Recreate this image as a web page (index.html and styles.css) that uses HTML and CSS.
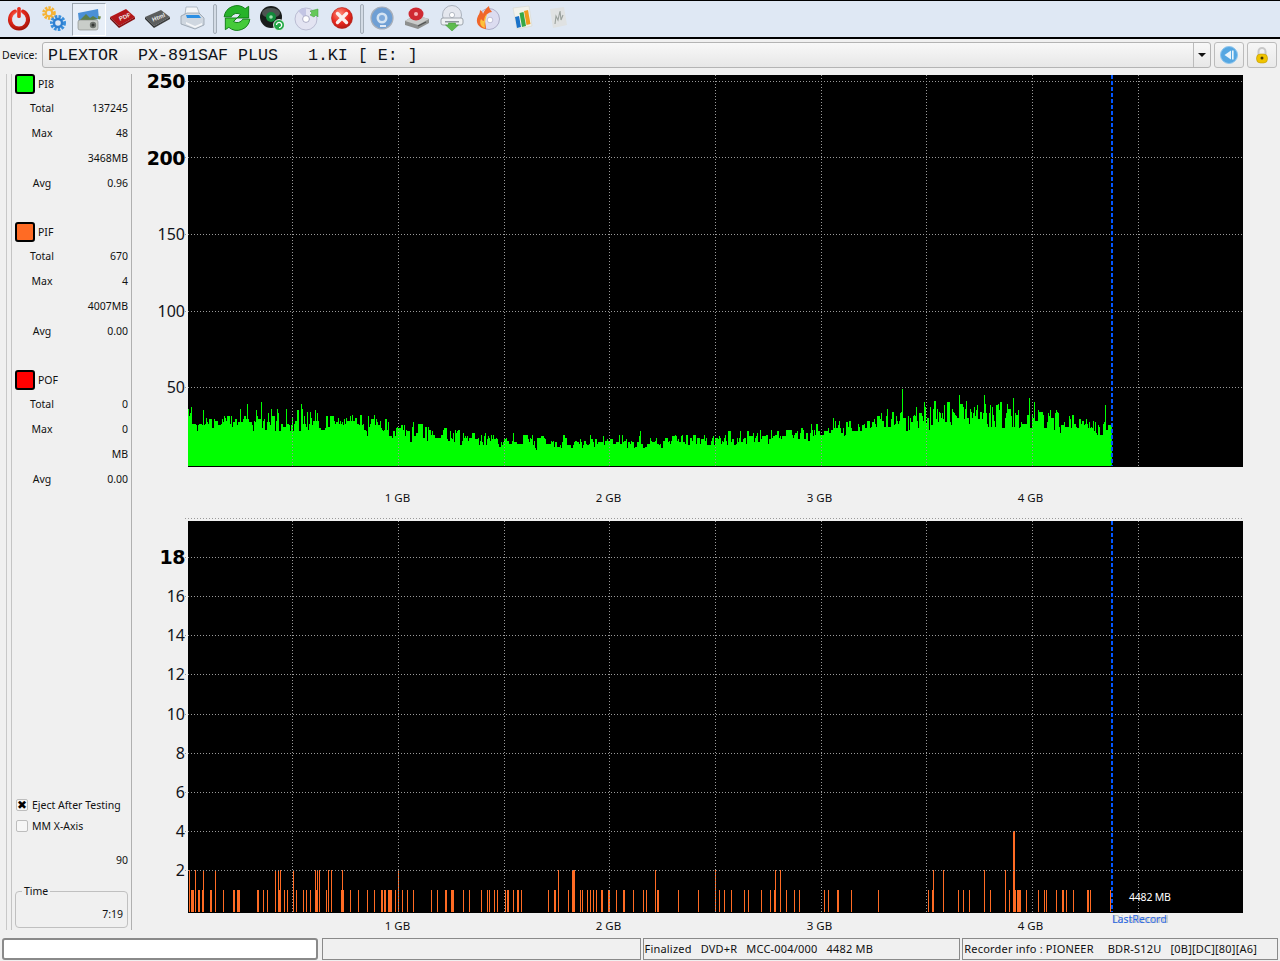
FILE: index.html
```html
<!DOCTYPE html>
<html lang="en">
<head>
<meta charset="utf-8">
<title>Disc Quality Test</title>
<link rel="stylesheet" href="styles.css">
</head>
<body>
<div class="app">
  <header class="toolbar">
    <svg class="tool" viewBox="0 0 28 28"><defs><radialGradient id="rd" cx=".4" cy=".3" r=".8"><stop offset="0" stop-color="#ff8a70"/><stop offset=".5" stop-color="#e62a1c"/><stop offset="1" stop-color="#a31208"/></radialGradient></defs><path d="M10 7.500a9 9 0 1 0 8 0" fill="none" stroke="url(#rd)" stroke-width="4" stroke-linecap="round"/><rect x="12.200" y="3" width="3.600" height="11" rx="1.600" fill="#e8301f"/></svg>
    <svg class="tool" viewBox="0 0 28 28"><circle cx="9" cy="9" r="5" fill="none" stroke="#f5b335" stroke-width="3.600" stroke-dasharray="2.200 1"/><circle cx="9" cy="9" r="3.200" fill="none" stroke="#f5b335" stroke-width="2"/><circle cx="18" cy="19" r="6" fill="none" stroke="#3a8fdc" stroke-width="4" stroke-dasharray="2.400 1.100"/><circle cx="18" cy="19" r="4" fill="none" stroke="#2f7fd0" stroke-width="2.400"/></svg>
    <span class="tool-on"><svg class="tool" viewBox="0 0 28 28"><path d="M3 8l20-4 1 10-20 3z" fill="#4b90d6"/><path d="M5 15l6-6 4 4 3-2 5 3-16 3z" fill="#5d7f4a"/><rect x="3" y="15" width="20" height="10" rx="2" fill="#c9cdc9" stroke="#80857f" stroke-width=".6"/><circle cx="18" cy="20" r="3.200" fill="#6f746f"/><circle cx="18" cy="20" r="1.500" fill="#353835"/><path d="M23 11l3 .5-1 3-2-.5z" fill="#6f8a48"/></svg></span>
    <svg class="tool" viewBox="0 0 28 28"><path d="M2 13L18 5l9 8-16 9z" fill="#b3171a"/><path d="M2 13l9 9v2L2 15z" fill="#6e0c0e"/><path d="M11 22l16-9v2L11 24z" fill="#8a1012"/><text class="chip-text" x="11" y="16" transform="rotate(-22 14 14)">PDF</text></svg>
    <svg class="tool" viewBox="0 0 28 28"><path d="M2 13L18 6l9 7-16 9z" fill="#5c5e5e"/><path d="M2 13l9 9v2L2 15z" fill="#2d2e2e"/><path d="M11 22l16-9v2L11 24z" fill="#3d3e3e"/><text class="chip-text" x="9" y="16" transform="rotate(-22 14 14)">Html</text></svg>
    <svg class="tool" viewBox="0 0 28 28"><path d="M8 3l11 0 3 8H7z" fill="#f4f6f8" stroke="#9aa5b1" stroke-width=".7"/><path d="M3 12l6-3h12l5 5v7l-9 4-14-5z" fill="#cfd7e0" stroke="#8995a1" stroke-width=".7"/><path d="M8 11h13l2 3H9z" fill="#2b8fe3"/><path d="M8 18l9 4 7-3v2l-7 3-9-4z" fill="#f4f6f8"/></svg>
    <i class="sep"></i>
    <svg class="tool" viewBox="2 2 24 24"><path d="M3 13a11 11 0 0 1 18-7l3-2v10h-10l3-3a5.500 5.500 0 0 0-8 2z" fill="#27b32a" stroke="#0c7a12" stroke-width=".8"/><path d="M25 15a11 11 0 0 1-18 7l-3 2v-10h10l-3 3a5.500 5.500 0 0 0 8-2z" fill="#45cb3a" stroke="#0c7a12" stroke-width=".8"/></svg>
    <svg class="tool" viewBox="0 0 28 28"><circle cx="13" cy="13" r="11" fill="#191c1b"/><ellipse cx="13" cy="9" rx="9" ry="5" fill="#4d5351"/><circle cx="13" cy="13" r="5" fill="#128a3a"/><circle cx="13" cy="13" r="1.800" fill="#9fe0b0"/><circle cx="21" cy="21" r="5.500" fill="#23a847" stroke="#fff" stroke-width=".8"/><path d="M18.500 21a2.600 2.600 0 1 1 2.500 2.600" fill="none" stroke="#fff" stroke-width="1.300"/></svg>
    <svg class="tool" viewBox="0 0 28 28"><circle cx="13" cy="15" r="11" fill="#e3e4f2" stroke="#a9abc4" stroke-width=".7"/><path d="M13 15L5 7a11 11 0 0 1 8-3z" fill="#c3c5e4"/><circle cx="13" cy="15" r="3.400" fill="#fff" stroke="#9a9cba" stroke-width=".8"/><path d="M17 11l2-2-2-2 8-2 0 8-2-2-2 2z" fill="#66c95a" stroke="#3b9d36" stroke-width=".5"/></svg>
    <svg class="tool" viewBox="0 0 28 28"><defs><radialGradient id="rx" cx=".4" cy=".3" r=".8"><stop offset="0" stop-color="#ff8e7a"/><stop offset=".55" stop-color="#e8281f"/><stop offset="1" stop-color="#a8160f"/></radialGradient></defs><circle cx="14" cy="14" r="10.500" fill="url(#rx)" stroke="#b01c14" stroke-width=".6"/><path d="M9.500 9.500l9 9m0-9l-9 9" stroke="#fbf0ee" stroke-width="3.400" stroke-linecap="round"/></svg>
    <i class="sep sep-b"></i>
    <svg class="tool" viewBox="0 0 28 28"><circle cx="14" cy="14" r="11" fill="#6f9fd4" stroke="#a7aeb9" stroke-width="1.200"/><circle cx="14" cy="14" r="5.500" fill="#d5e4f3"/><circle cx="14" cy="14" r="3" fill="#7faadb"/><rect x="12" y="21" width="6" height="2" fill="#dfe8f4"/></svg>
    <svg class="tool" viewBox="0 0 28 28"><path d="M2 17l10-6 14 4v4l-11 6-13-4z" fill="#8d8f8e"/><path d="M2 17l13 4 11-6-14-4z" fill="#c9cbca"/><ellipse cx="13" cy="10" rx="7.500" ry="6.500" fill="#cf2a32"/><circle cx="13" cy="10" r="2" fill="#f5b5b8"/><path d="M15 22l8-4" stroke="#4f5150" stroke-width="1.200"/></svg>
    <svg class="tool" viewBox="0 0 28 28"><circle cx="14" cy="11" r="9.500" fill="#e4e7ee" stroke="#9ca3af" stroke-width=".8"/><circle cx="14" cy="11" r="2.600" fill="#fff" stroke="#9ca3af" stroke-width=".7"/><rect x="3" y="14" width="22" height="7" rx="2" fill="#eef1f4" stroke="#8d949c" stroke-width=".8"/><rect x="7" y="17" width="14" height="1.500" fill="#8d949c"/><path d="M10.500 19h7v2h3L14 27l-6.500-6h3z" fill="#5dbb4e" stroke="#3a9233" stroke-width=".5"/></svg>
    <svg class="tool" viewBox="0 0 28 28"><circle cx="16" cy="15" r="10.500" fill="#dcdcf0" stroke="#9fa0bd" stroke-width=".8"/><circle cx="17" cy="16" r="2.800" fill="#fff" stroke="#9fa0bd" stroke-width=".6"/><path d="M13 25C5 24 2 18 5 12c1-2 2-3 2-6 2 1 3 3 3 4 1-3 3-6 6-8 0 3 2 4 3 6-3 0-7 3-7 7 0 4 1 7 1 10z" fill="#f0662a"/><path d="M12 24c-4-1-6-5-4-9 1 1 2 2 3 2 0-3 1-5 3-7-1 5-3 8-2 14z" fill="#fdc13c"/></svg>
    <svg class="tool" viewBox="0 0 28 28"><path d="M5 4l16-2 3 20-15 3z" fill="#f2f2ec" stroke="#d6d6cc" stroke-width=".6"/><path d="M7 13l4-1 2 11-4 1z" fill="#1a72c9"/><path d="M11.500 9l4-1 2.500 14-4 1z" fill="#37a845"/><path d="M16 7l4-1 2.500 14-4 1z" fill="#f09a1c"/></svg>
    <svg class="tool tool-faded" viewBox="0 0 28 28"><path d="M7 5l14-2 3 18-14 3z" fill="#e1e2df"/><path d="M12 20l1-8 2 4 2-9 1 9 2-5" fill="none" stroke="#8f958e" stroke-width="1.100"/></svg>
  </header>

  <div class="device-row">
    <span class="device-label">Device:</span>
    <div class="device-select">
      <span class="device-value">PLEXTOR  PX-891SAF PLUS   1.KI [ E: ]</span>
      <span class="device-arrow"><i></i></span>
    </div>
    <button class="icon-btn" type="button" aria-label="Back"><svg viewBox="0 0 20 20" class="btn-svg"><circle cx="10" cy="10" r="8.500" fill="#55a7e2" stroke="#8fc6ee"/><path d="M12 5.500v9L5.500 10z" fill="#eaf5fc"/><rect x="13" y="5.500" width="1.600" height="9" fill="#eaf5fc"/></svg></button>
    <button class="icon-btn" type="button" aria-label="Lock"><svg viewBox="0 0 20 20" class="btn-svg"><path d="M6.500 10V6.500a3.500 3.500 0 0 1 7 0V10" fill="none" stroke="#c8c8c8" stroke-width="2"/><rect x="4.500" y="9" width="11" height="9" rx="4" fill="#f0c400" stroke="#b48f00" stroke-width=".5"/><circle cx="10" cy="13" r="1.500" fill="#4a3b00"/></svg></button>
  </div>

  <div class="main">
    <aside class="side">
      <section class="stat-group">
        <div class="stat-head"><i class="swatch swatch-green"></i><span>PI8</span></div>
        <div class="stat-row"><span class="stat-key">Total</span><span>137245</span></div>
        <div class="stat-row"><span class="stat-key">Max</span><span>48</span></div>
        <div class="stat-row"><span class="stat-key"></span><span>3468MB</span></div>
        <div class="stat-row"><span class="stat-key">Avg</span><span>0.96</span></div>
      </section>
      <section class="stat-group">
        <div class="stat-head"><i class="swatch swatch-orange"></i><span>PIF</span></div>
        <div class="stat-row"><span class="stat-key">Total</span><span>670</span></div>
        <div class="stat-row"><span class="stat-key">Max</span><span>4</span></div>
        <div class="stat-row"><span class="stat-key"></span><span>4007MB</span></div>
        <div class="stat-row"><span class="stat-key">Avg</span><span>0.00</span></div>
      </section>
      <section class="stat-group">
        <div class="stat-head"><i class="swatch swatch-red"></i><span>POF</span></div>
        <div class="stat-row"><span class="stat-key">Total</span><span>0</span></div>
        <div class="stat-row"><span class="stat-key">Max</span><span>0</span></div>
        <div class="stat-row"><span class="stat-key"></span><span>MB</span></div>
        <div class="stat-row"><span class="stat-key">Avg</span><span>0.00</span></div>
      </section>
      <div class="side-bottom">
        <label class="check"><i class="box box-on">&#10006;</i>Eject After Testing</label>
        <label class="check"><i class="box"></i>MM X-Axis</label>
        <div class="speed">90</div>
        <fieldset class="time"><legend>Time</legend><div>7:19</div></fieldset>
      </div>
    </aside>

    <div class="charts">
      <div class="chart">
        <div class="yaxis yaxis-top">
          <span class="big">250</span><span class="big">200</span><span>150</span><span>100</span><span>50</span>
        </div>
        <div class="plot" id="plot-pi"></div>
      </div>
      <div class="xaxis xaxis-top"><span>1 GB</span><span>2 GB</span><span>3 GB</span><span>4 GB</span></div>
      <div class="chart">
        <div class="yaxis yaxis-low">
          <span class="big">18</span><span>16</span><span>14</span><span>12</span><span>10</span><span>8</span><span>6</span><span>4</span><span>2</span>
        </div>
        <div class="plot" id="plot-pif">
          <span class="mark-size">4482 MB</span>
          <span class="mark-ghost">DiskRecord</span>
          <span class="mark-last">LastRecord</span>
        </div>
      </div>
      <div class="xaxis xaxis-low"><span>1 GB</span><span>2 GB</span><span>3 GB</span><span>4 GB</span></div>
    </div>
  </div>

  <footer class="status">
    <div class="cell cell-input"></div>
    <div class="cell cell-empty"></div>
    <div class="cell cell-disc"><span>Finalized</span><span>DVD+R</span><span>MCC-004/000</span><span>4482 MB</span></div>
    <div class="cell cell-rec"><span class="rec-head">Recorder info&nbsp;: PIONEER</span><span>BDR-S12U</span><span>[0B][DC][80][A6]</span></div>
  </footer>
</div>
<script src="chart.js"></script>
</body>
</html>
```
FILE: styles.css
```css
* { box-sizing: border-box; }
html, body { margin: 0; height: 100%; }
body {
  background: #f0f0f0;
  color: #111;
  font: 10.5px/14px "Noto Sans", "Liberation Sans", sans-serif;
  overflow: hidden;
}
.app { display: flex; flex-direction: column; height: 961px; }

.toolbar {
  height: 39px;
  flex: none;
  display: flex;
  align-items: center;
  padding: 0 0 0 5px;
  background: #dfe8f4;
  border-top: 1px solid #000;
  border-bottom: 2px solid #000;
}
.tool { width: 28px; height: 28px; flex: none; margin: 0 7px 2px 0; display: block; }
.tool-faded { opacity: .85; }
.tool-on {
  width: 34px; height: 33px; flex: none;
  margin: 0 2px 0 -3px;
  display: flex; align-items: center; justify-content: center;
  background: #e8eff8;
  border: 1px solid #9ca6b0;
  border-right-color: #fff; border-bottom-color: #fff;
}
.tool-on .tool { margin: 0; }
.sep {
  width: 4px; height: 30px; flex: none;
  margin: 0 6px 0 0;
  border: 1px solid #a4aeb9;
  border-radius: 2px;
  background: #d3dbe5;
}
.sep-b { margin: 0 4px 0 -3px; }
.chip-text { font: bold 6px "Liberation Sans", sans-serif; fill: #eee; }

.device-row {
  height: 33px; flex: none;
  display: flex;
  align-items: flex-start;
  padding: 3px 3px 0 2px;
}
.device-label { width: 40px; line-height: 26px; flex: none; }
.device-select {
  width: 1169px; height: 26px; flex: none;
  display: flex;
  border: 1px solid #b4b4b4;
  border-radius: 3px;
  background: linear-gradient(#f8f8f8, #e7e7e7);
}
.device-value {
  flex: 1;
  padding-left: 5px;
  font: 16.67px/25px "Liberation Mono", monospace;
  white-space: pre;
  color: #10131a;
}
.device-arrow {
  width: 17px;
  border-left: 1px solid #bbb;
  display: flex; align-items: center; justify-content: center;
}
.device-arrow i {
  width: 0; height: 0;
  border-left: 4px solid transparent;
  border-right: 4px solid transparent;
  border-top: 4px solid #111;
}
.icon-btn {
  width: 30px; height: 26px; flex: none;
  margin-left: 3px; padding: 0;
  display: flex; align-items: center; justify-content: center;
  border: 1px solid #bcbcbc;
  border-radius: 3px;
  background: linear-gradient(#f6f6f6, #e9e9e9);
}
.btn-svg { width: 20px; height: 20px; }

.main { flex: 1; min-height: 0; height: 859px; display: flex; overflow: hidden; }

.side {
  flex: none;
  width: 121px;
  margin: 2px 0 1px 11px;
  padding: 0 3px;
  display: flex; flex-direction: column;
  border-left: 1px solid #c4c4c4;
  border-right: 1px solid #b0b0b0;
  box-shadow: -4px 0 0 0 #f0f0f0, -5px 0 0 0 #c8c8c8;
}
.stat-group { height: 148px; flex: none; }
.stat-head { height: 20px; display: flex; align-items: center; gap: 3px; }
.swatch {
  width: 20px; height: 20px; flex: none;
  border: 2px solid #000; border-radius: 3px;
}
.swatch-green { background: #00ff00; }
.swatch-orange { background: #ff6b24; }
.swatch-red { background: #ff0000; }
.stat-row {
  height: 25px;
  display: flex; justify-content: space-between; align-items: center;
  position: relative; top: 1px;
}
.stat-key { width: 54px; text-align: center; }
.side-bottom { margin-top: auto; }
.check { height: 21px; display: flex; align-items: center; gap: 4px; margin-left: 1px; }
.box {
  width: 12px; height: 12px; flex: none;
  border: 1px solid #bdbdbd; border-radius: 2px;
  background: #f6f6f6;
  font: 12px/10px "DejaVu Sans", sans-serif;
  text-align: center; color: #000;
}
.speed { text-align: right; margin-top: 17px; line-height: 14px; }
.time {
  margin: 19px 0 2px;
  padding: 0 4px 0 0;
  height: 42px;
  min-width: 0;
  border: 1px solid #c0c0c0;
  border-radius: 4px;
  text-align: right;
}
.time legend { margin-left: 6px; padding: 0 2px; text-align: left; line-height: 10px; }
.time div { margin-top: 11px; }

.charts { flex: 1; min-width: 0; padding-top: 3px; }
.chart { display: flex; height: 392px; }
.yaxis {
  width: 56px; flex: none;
  display: grid;
  justify-items: end;
  align-items: center;
  padding-right: 3px;
  font-size: 16px;
  color: #10131a;
}
.yaxis .big { font: bold 19px/16px "DejaVu Sans", sans-serif; letter-spacing: -.5px; color: #000; }
.yaxis-top { grid-auto-rows: 76.6px; margin-top: -32.4px; align-content: start; }
.yaxis-low { grid-auto-rows: 39.13px; margin-top: 16.5px; align-content: start; }
.plot { position: relative; width: 1055px; height: 392px; background: #000; flex: none; }
.plot svg { position: absolute; left: 0; top: 0; overflow: visible; display: block; }
.xaxis { display: flex; padding-left: 160px; font-size: 11.5px; }
.xaxis span { width: 211px; text-align: center; }
.xaxis-top { height: 54px; padding-top: 24px; }
.xaxis-low { height: 18px; padding-top: 6px; }
.mark-size { position: absolute; left: 941px; top: 369px; color: #fff; letter-spacing: -.2px; }
.mark-ghost { position: absolute; left: 925px; top: 391px; color: #b9b9b9; }
.mark-last { position: absolute; left: 924px; top: 391px; color: #2a6ae8; }

.status {
  height: 30px; flex: none;
  display: flex;
  gap: 2px;
  padding: 7px 2px 1px 2px;
}
.cell {
  height: 22px;
  display: flex;
  gap: 9px;
  border: 1px solid #8a8a8a;
  padding-left: 1px;
  font-size: 11px;
  letter-spacing: .2px;
  line-height: 20px;
  white-space: nowrap;
  overflow: hidden;
}
.cell-input { width: 316px; background: #fff; border: 2px solid #8a8a8a; border-radius: 3px; margin-right: 2px; }
.cell-empty { width: 319px; }
.cell-disc { width: 318px; }
.cell-rec { width: 316px; }
.rec-head { margin-right: 5px; }
```
FILE: chart.js
```js
(function () {
  var NS = 'http://www.w3.org/2000/svg';
  var VX = [104, 210, 316, 421, 527, 633, 738, 844, 950];
  var W = 1055, H = 392, BASE = 391, BLUE = 923;
  var DOT = '#9a9a9a';

  function el(name, attrs, parent) {
    var n = document.createElementNS(NS, name);
    for (var k in attrs) n.setAttribute(k, attrs[k]);
    if (parent) parent.appendChild(n);
    return n;
  }
  function svg(host) {
    var s = el('svg', { width: W, height: H, viewBox: '0 0 ' + W + ' ' + H, 'shape-rendering': 'crispEdges' });
    host.insertBefore(s, host.firstChild);
    return s;
  }
  function grid(s, hy, x0) {
    var d = '';
    hy.forEach(function (y) { d += 'M' + x0 + ' ' + (y + 0.5) + 'H' + W; });
    VX.forEach(function (x) { d += 'M' + (x + 0.5) + ' 0V' + BASE; });
    el('path', { d: d, fill: 'none', stroke: DOT, 'stroke-width': 1, 'stroke-dasharray': '1 2' }, s);
  }
  function blue(s) {
    el('path', { d: 'M' + (BLUE + 1) + ' 0V' + BASE, fill: 'none', stroke: '#0055ff', 'stroke-width': 2, 'stroke-dasharray': '4 2' }, s);
  }

  /* PI8: envelope [absolute x, top y] with noise and the visible spikes */
  var env = [[188, 422], [240, 422], [300, 420], [345, 424], [400, 431], [450, 436], [510, 442], [600, 442], [700, 441], [770, 438], [820, 431], [880, 422], [905, 418], [960, 412], [1000, 415], [1050, 420], [1111, 430]];
  var spikes = { 191: 407, 203: 410, 247: 404, 301: 404, 302: 408, 240: 409, 271: 408, 388: 423, 430: 430, 513: 433, 622: 435, 811: 424, 835: 420, 902: 389, 924: 403, 944: 406, 959: 395, 966: 401, 984: 394, 985: 404, 1013: 398, 1029: 398, 1034: 402, 1105: 406 };
  var seed = 12345;
  function rnd() { seed = (seed * 1664525 + 1013904223) >>> 0; return seed / 4294967296; }
  function envAt(x) {
    for (var i = 1; i < env.length; i++) {
      if (x <= env[i][0]) {
        var a = env[i - 1], b = env[i];
        return a[1] + (b[1] - a[1]) * (x - a[0]) / (b[0] - a[0]);
      }
    }
    return env[env.length - 1][1];
  }
  var pi = document.getElementById('plot-pi');
  var s1 = svg(pi);
  var d = 'M0 ' + BASE, prev = 0;
  for (var x = 188; x < 1112; x++) {
    var e = envAt(x);
    var amp = 8 + (445 - e) * 0.25;
    var n = (rnd() + rnd() - 1) * amp;
    if (rnd() < 0.35) n = prev;
    prev = n;
    if (rnd() < 0.08) n -= amp * 0.6 * rnd();
    if (rnd() < 0.03) n += amp * 0.4 * rnd();
    var top = e + n;
    if (spikes[x]) top = spikes[x];
    top = Math.round(top / 1.53) * 1.53;
    d += 'V' + Math.round(top - 75) + 'H' + (x - 187);
  }
  d += 'V' + BASE + 'Z';
  el('path', { d: d, fill: '#00ff00' }, s1);
  grid(s1, [6, 82, 159, 236, 312], -3);
  blue(s1);

  /* PIF: [absolute x, width, level] */
  var bars = [[189,1,2],[191,3,1],[195,1,2],[198,2,1],[202,1,1],[203,1,2],[210,2,1],[215,1,2],[223,1,1],[233,2,1],[237,3,1],[257,2,1],[263,1,1],[267,1,1],[275,1,2],[278,3,1],[278,1,2],[280,1,2],[284,1,1],[287,1,1],[293,1,2],[296,1,1],[303,1,1],[306,1,1],[310,1,1],[315,1,2],[316,2,1],[317,1,2],[319,1,2],[326,1,1],[328,1,2],[331,1,2],[341,3,1],[342,1,2],[350,1,1],[358,1,1],[367,1,1],[374,1,1],[381,2,1],[384,2,1],[388,4,1],[395,1,1],[398,1,2],[402,1,1],[407,1,1],[413,1,1],[431,1,1],[437,1,1],[445,2,1],[451,3,1],[463,1,1],[469,1,1],[481,1,1],[487,1,1],[489,1,1],[494,1,1],[497,1,1],[505,1,1],[507,2,1],[513,1,1],[517,2,1],[521,1,1],[548,1,1],[554,2,1],[558,1,2],[568,1,1],[572,3,2],[580,1,1],[582,1,1],[587,1,1],[590,1,1],[593,1,1],[596,1,1],[601,2,1],[608,2,1],[616,1,1],[623,2,1],[633,1,1],[643,1,1],[646,1,1],[655,1,2],[657,2,1],[678,1,1],[698,1,1],[715,1,2],[719,1,1],[724,1,1],[731,1,1],[744,1,1],[748,1,1],[761,1,1],[770,1,1],[774,2,1],[775,1,2],[780,1,2],[786,1,1],[794,1,1],[799,1,1],[824,1,1],[828,1,1],[837,2,1],[851,1,1],[878,1,1],[928,1,1],[932,2,1],[933,1,2],[943,1,2],[958,1,1],[963,1,1],[969,1,1],[984,1,2],[990,1,1],[1005,1,2],[1009,1,1],[1013,2,4],[1015,1,1],[1017,4,1],[1026,1,1],[1038,1,1],[1044,1,1],[1046,1,1],[1056,1,1],[1062,2,1],[1066,1,1],[1073,1,1],[1087,2,1],[1090,1,1],[1110,1,1]];
  var TOP = { 1: 369, 2: 349, 4: 310 };
  var pif = document.getElementById('plot-pif');
  var s2 = svg(pif);
  var o = '';
  bars.forEach(function (b) {
    o += 'M' + (b[0] - 188) + ' ' + BASE + 'V' + TOP[b[2]] + 'h' + b[1] + 'V' + BASE + 'Z';
  });
  el('path', { d: o, fill: '#ff6b24' }, s2);
  grid(s2, [36, 75, 114, 153, 193, 232, 271, 310, 349], -3);
  el('path', { d: 'M-3 -2.500H' + W, fill: 'none', stroke: DOT, 'stroke-dasharray': '1 2' }, s2);
  blue(s2);
})();
```
